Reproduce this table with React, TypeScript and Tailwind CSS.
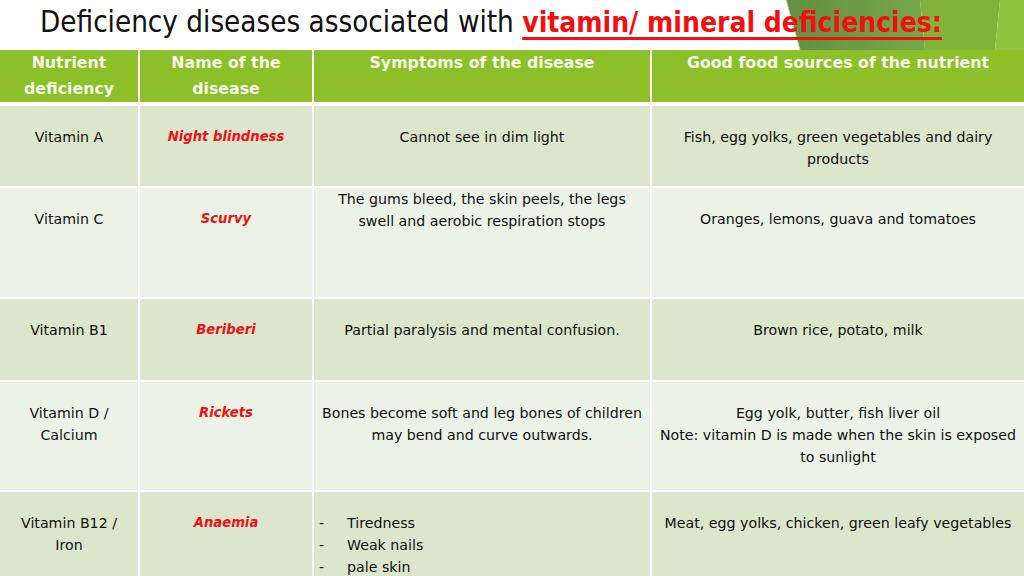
import React from 'react';

type Row = {
  nutrient: string[];
  disease: string;
  symptoms: React.ReactNode;
  food: string[];
  height: string;
  dark: boolean;
  symptomsTop?: boolean;
};

const rows: Row[] = [
  {
    nutrient: ['Vitamin A'],
    disease: 'Night blindness',
    symptoms: 'Cannot see in dim light',
    food: ['Fish, egg yolks, green vegetables and dairy', 'products'],
    height: 'h-[80px]',
    dark: true,
  },
  {
    nutrient: ['Vitamin C'],
    disease: 'Scurvy',
    symptoms: (
      <>
        The gums bleed, the skin peels, the legs
        <br />
        swell and aerobic respiration stops
      </>
    ),
    food: ['Oranges, lemons, guava and tomatoes'],
    height: 'h-[109px]',
    dark: false,
    symptomsTop: true,
  },
  {
    nutrient: ['Vitamin B1'],
    disease: 'Beriberi',
    symptoms: 'Partial paralysis and mental confusion.',
    food: ['Brown rice, potato, milk'],
    height: 'h-[81px]',
    dark: true,
  },
  {
    nutrient: ['Vitamin D /', 'Calcium'],
    disease: 'Rickets',
    symptoms: (
      <>
        Bones become soft and leg bones of children
        <br />
        may bend and curve outwards.
      </>
    ),
    food: ['Egg yolk, butter, fish liver oil', 'Note: vitamin D is made when the skin is exposed', 'to sunlight'],
    height: 'h-[108px]',
    dark: false,
  },
  {
    nutrient: ['Vitamin B12 /', 'Iron'],
    disease: 'Anaemia',
    symptoms: (
      <ul className="text-left pl-[5px]">
        {['Tiredness', 'Weak nails', 'pale skin'].map((s) => (
          <li key={s} className="flex">
            <span className="w-[28px]">-</span>
            <span>{s}</span>
          </li>
        ))}
      </ul>
    ),
    food: ['Meat, egg yolks, chicken, green leafy vegetables'],
    height: 'h-[90px]',
    dark: true,
  },
];

// green facets in the top-right corner of the slide
function Decoration() {
  return (
    <svg className="absolute top-0 right-0" width="240" height="50" viewBox="0 0 240 50">
      <defs>
        <linearGradient id="dg" x1="0" y1="0" x2="1" y2="0">
          <stop offset="0" stopColor="#638f41" />
          <stop offset="1" stopColor="#77a74a" />
        </linearGradient>
      </defs>
      <polygon points="2,0 136,0 141,50 16,50" fill="url(#dg)" />
      <polygon points="136,0 216,0 211,50 141,50" fill="#81b33b" />
      <polygon points="216,0 240,0 240,50 211,50" fill="#90c43f" />
      <line x1="2" y1="0" x2="16" y2="50" stroke="#cfd9c8" strokeWidth="1" />
    </svg>
  );
}

export default function App() {
  return (
    <div
      className="w-[1024px] h-[576px] overflow-hidden bg-white text-[#111] relative"
      style={{ fontFamily: '"DejaVu Sans", sans-serif' }}
    >
      <Decoration />
      <div
        className="relative h-[50px] pl-[40px] pt-[2px] text-[29.3px] leading-[40px] whitespace-nowrap"
        style={{ fontFamily: '"DejaVu Sans Condensed", "DejaVu Sans", sans-serif', fontStretch: 'condensed' }}
      >
        Deficiency diseases associated with{' '}
        <span className="font-bold text-[28px] text-[#f01010] underline decoration-[3px] underline-offset-[5px]">
          vitamin/ mineral deficiencies:
        </span>
      </div>

      <div className="grid grid-cols-[138px_172px_336px_1fr] gap-x-[2px] bg-white">
        {['Nutrient|deficiency', 'Name of the|disease', 'Symptoms of the disease', 'Good food sources of the nutrient'].map(
          (h) => (
            <div
              key={h}
              className="bg-[#8cbf28] h-[52px] mb-[4px] text-center text-[#f4f9ea] font-bold text-[15.8px] leading-[26px] whitespace-nowrap"
            >
              {h.split('|').map((l) => (
                <div key={l}>{l}</div>
              ))}
            </div>
          )
        )}

        {rows.map((r, i) => {
          const bg = r.dark ? 'bg-[#dce6cc]' : 'bg-[#edf2e7]';
          const cell = `${bg} ${r.height} mb-[2px] text-center text-[14.2px] leading-[22px] whitespace-nowrap`;
          return (
            <React.Fragment key={i}>
              <div className={`${cell} pt-[20px]`}>
                {r.nutrient.map((n) => (
                  <div key={n}>{n}</div>
                ))}
              </div>
              <div className={`${cell} pt-[20px] text-[#ee1111] font-bold italic !text-[13.2px]`}>{r.disease}</div>
              <div className={`${cell} ${r.symptomsTop ? 'pt-0' : 'pt-[20px]'}`}>{r.symptoms}</div>
              <div className={`${cell} pt-[20px]`}>
                {r.food.map((f) => (
                  <div key={f}>{f}</div>
                ))}
              </div>
            </React.Fragment>
          );
        })}
      </div>
    </div>
  );
}
